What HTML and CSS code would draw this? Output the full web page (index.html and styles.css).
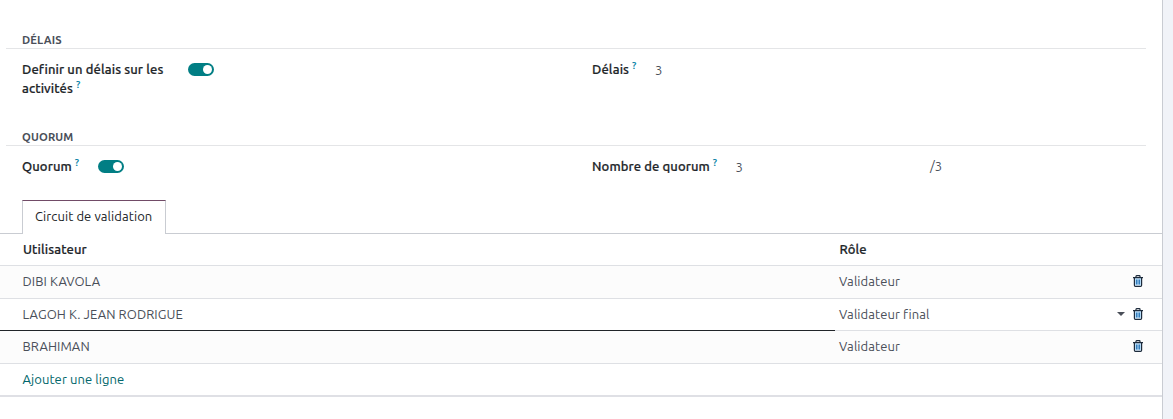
FILE: index.html
```html
<!DOCTYPE html>
<html lang="fr">
<head>
<meta charset="utf-8">
<title>Circuit de validation</title>
<link rel="stylesheet" href="styles.css">
</head>
<body>
<svg class="defs" width="0" height="0" aria-hidden="true">
  <symbol id="trash" viewBox="0 0 10 12">
    <path class="bin-fill" d="M1.5 3h7v7.5h-7z"/>
    <path class="bin-lid" d="M0 2.7h10M3 2.5V1.3Q3 .7 3.6 .7h2.8Q7 .7 7 1.3v1.2"/>
    <path class="bin-body" d="M1.4 3v7.2q0 1.1 1 1.1h5.2q1 0 1-1.1V3"/>
    <path class="bin-bars" d="M3.4 4.5v5M5 4.5v5M6.6 4.5v5"/>
  </symbol>
</svg>
<main class="sheet">
  <section class="group group-delay">
    <h2 class="group-title">DÉLAIS</h2>
    <div class="fields">
      <div class="field">
        <label class="label label-activity">Definir un délais sur les<br>activités <sup>?</sup></label>
        <span class="switch"></span>
      </div>
      <div class="field">
        <label class="label label-delay">Délais <sup>?</sup></label>
        <span class="value">3</span>
      </div>
    </div>
  </section>
  <section class="group">
    <h2 class="group-title">QUORUM</h2>
    <div class="fields">
      <div class="field">
        <label class="label label-quorum">Quorum <sup>?</sup></label>
        <span class="switch"></span>
      </div>
      <div class="field">
        <label class="label label-number">Nombre de quorum <sup>?</sup></label>
        <span class="value value-number">3</span>
        <span class="total">/3</span>
      </div>
    </div>
  </section>
  <nav class="tabs"><a class="tab">Circuit de validation</a></nav>
  <div class="list">
    <div class="row head"><div class="user">Utilisateur</div><div class="role">Rôle</div></div>
    <div class="row odd tall"><div class="user">DIBI KAVOLA</div><div class="role">Validateur<svg class="trash"><use href="#trash"/></svg></div></div>
    <div class="row"><div class="user selected">LAGOH K. JEAN RODRIGUE</div><div class="role">Validateur final<i class="caret"></i><svg class="trash"><use href="#trash"/></svg></div></div>
    <div class="row odd tall"><div class="user">BRAHIMAN</div><div class="role">Validateur<svg class="trash"><use href="#trash"/></svg></div></div>
    <div class="row add"><div class="user">Ajouter une ligne</div></div>
  </div>
</main>
</body>
</html>
```
FILE: styles.css
```css
* { box-sizing: border-box; }
body {
  margin: 0;
  height: 419px;
  overflow: hidden;
  background: #f1f3f8;
  color: #4a4f59;
  font: 13px/19px Ubuntu, "Noto Sans", sans-serif;
  letter-spacing: .08px;
}
.defs { display: block; }
.sheet {
  width: 1163px;
  height: 419px;
  padding-top: 31px;
  background: #fff;
  border-right: 1px solid #c9ccd2;
}
.group { height: 79px; margin: 0 16px 0 6px; }
.group-delay { height: 97px; }
.group-title {
  height: 18px;
  margin: 0;
  padding-left: 16px;
  border-bottom: 1px solid #e4e5e7;
  font-size: 11.2px;
  line-height: 18px;
  font-weight: 700;
  letter-spacing: .15px;
}
.fields { display: grid; grid-template-columns: 570px 1fr; padding: 11px 0 0 16px; }
.field { display: flex; align-items: flex-start; }
.label, .head {
  color: #212529;
  font-weight: 500;
  letter-spacing: .11px;
  -webkit-text-stroke: .2px currentColor;
}
.label { white-space: nowrap; }
.label-activity { width: 166px; }
.label-delay { width: 63px; }
.label-quorum { width: 76px; }
.label-number { width: 143.5px; }
sup { color: #0180a5; font-size: 9.5px; font-weight: 500; line-height: 0; vertical-align: 5px; }
.switch {
  display: flex;
  justify-content: flex-end;
  width: 26px;
  height: 13px;
  padding: 2px;
  margin-top: 3px;
  border-radius: 7px;
  background: #017e84;
}
.switch::after { content: ""; width: 9px; height: 9px; border-radius: 50%; background: #fff; }
.value { padding-top: 1px; }
.value-number { width: 194.5px; }
.tabs {
  display: flex;
  height: 27px;
  padding-left: 22px;
  border-bottom: 1px solid #c9ccd2;
  align-items: flex-end;
}
.tab {
  height: 34px;
  width: 144px;
  margin-bottom: -1px;
  padding: 6px 0 0 12px;
  border: 1px solid #c9ccd2;
  border-top-color: #714b67;
  border-bottom: 0;
  background: #fff;
  color: #212529;
  white-space: nowrap;
}
.row { display: grid; grid-template-columns: 835px 1fr; height: 32px; line-height: 31px; }
.tall { height: 33px; }
.user, .role { border-bottom: 1px solid #dee0e4; }
.user { padding-left: 22.5px; }
.role { display: flex; align-items: flex-start; padding: 0 19px 0 4px; }
.head .user { padding-left: 23px; }
.head .role { padding-left: 4.5px; }
.odd { background: #fcfcfc; }
.selected { border-bottom-color: #212529; }
.trash { width: 10px; height: 12px; margin: 9px 0 0 auto; }
.caret { margin: 13px 0 0 auto; border: 4px solid transparent; border-top-color: #4a4f59; border-bottom: 0; }
.caret + .trash { margin-left: 8px; }
.bin-fill { fill: #c4e6ff; }
.bin-lid, .bin-body { fill: none; stroke: #1d2b3c; stroke-width: 1.2; }
.bin-bars { fill: none; stroke: #2472b5; stroke-width: 1; }
.add { height: 33px; color: #01666b; }
.add .user { grid-column: 1 / -1; border-bottom: 2px solid #dfe0e5; }
```
